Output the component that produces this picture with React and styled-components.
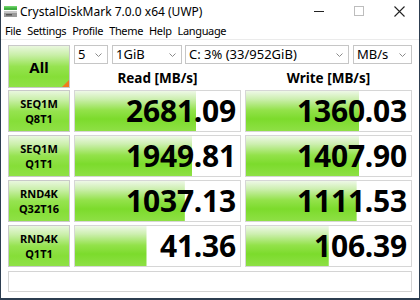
import React from "react";
import styled, { createGlobalStyle } from "styled-components";

const Global = createGlobalStyle`
  html, body { margin: 0; padding: 0; background: #fff; overflow: hidden; }
  * { box-sizing: border-box; }
`;

const Window = styled.div`
  width: 420px;
  height: 300px;
  background: #fff;
  border-left: 1px solid #2c3d50;
  border-right: 1px solid #2c3d50;
  border-bottom: 2px solid #2c3d50;
  font-family: "Noto Sans", "Open Sans", sans-serif;
  color: #000;
  display: flex;
  flex-direction: column;
`;

const TitleBar = styled.div`
  height: 22px;
  display: flex;
  align-items: center;
  padding-left: 2px;
`;

const TitleText = styled.span`
  font-size: 12px;
  margin-left: 2px;
  flex: 1;
  white-space: nowrap;
`;

const WinButton = styled.div`
  width: 40px;
  height: 22px;
  display: flex;
  align-items: center;
  justify-content: center;
`;

const MenuBar = styled.div`
  height: 18px;
  display: flex;
  align-items: center;
  padding-left: 1px;
  border-bottom: 1px solid #ebebeb;
`;

const MenuItem = styled.span`
  font-size: 11px;
  letter-spacing: -0.35px;
  padding: 0 3px;
`;

const Client = styled.div`
  flex: 1;
  padding: 5px 7px 0 7px;
  display: flex;
  flex-direction: column;
`;

const Top = styled.div`
  display: grid;
  grid-template-columns: 62px 1fr;
  column-gap: 4px;
`;

const greenLabel = `linear-gradient(to bottom, #e9f7de 0%, #c9efa8 22%, #96e350 50%, #86de38 75%, #8fe146 100%)`;

const AllButton = styled.div`
  position: relative;
  height: 43px;
  border: 1px solid #c9c9c9;
  background: ${greenLabel};
  display: flex;
  align-items: center;
  justify-content: center;
  font-weight: 700;
  font-size: 15px;
`;

const Corner = styled.div`
  position: absolute;
  right: 0;
  bottom: 0;
  width: 0;
  height: 0;
  border-left: 7px solid transparent;
  border-bottom: 7px solid #f07a1e;
`;

const RightTop = styled.div`
  display: flex;
  flex-direction: column;
`;

const Controls = styled.div`
  display: flex;
  height: 19px;
`;

const Select = styled.div`
  width: ${(p) => p.$w}px;
  margin-right: ${(p) => p.$gap || 0}px;
  height: 19px;
  border: 1px solid #c6c6c6;
  background: #fff;
  display: flex;
  align-items: center;
  padding-left: 3px;
  font-size: 13px;
  white-space: nowrap;
  overflow: hidden;
`;

const SelectText = styled.span`
  flex: 1;
  line-height: 17px;
`;

const Chevron = styled.svg`
  margin-right: 5px;
  flex: none;
`;

const HeaderRow = styled.div`
  display: grid;
  grid-template-columns: 167px 167px;
  column-gap: 4px;
  height: 24px;
`;

const Header = styled.div`
  display: flex;
  align-items: flex-end;
  justify-content: center;
  font-weight: 700;
  font-size: 13.5px;
  padding-bottom: 1px;
`;

const Results = styled.div`
  margin-top: 2px;
  display: grid;
  grid-template-columns: 62px 167px 167px;
  grid-auto-rows: 42px;
  column-gap: 4px;
  row-gap: 3px;
`;

const Label = styled.div`
  border: 1px solid #c9c9c9;
  background: ${greenLabel};
  display: flex;
  flex-direction: column;
  align-items: center;
  justify-content: center;
  font-weight: 700;
  font-size: 11px;
  line-height: 15px;
`;

const barGradient = `linear-gradient(to bottom, #eef8e7 0%, #cdefb0 20%, #93e24a 48%, #7cdb2c 70%, #8ee045 100%)`;

const Value = styled.div`
  border: 1px solid #d6d6d6;
  background-color: #fff;
  background-image: ${barGradient};
  background-repeat: no-repeat;
  background-position: left top;
  display: flex;
  align-items: center;
  justify-content: flex-end;
  padding-right: 4px;
  font-weight: 700;
  font-size: 30px;
  letter-spacing: -0.2px;
  line-height: 1;
`;

const Status = styled.div`
  margin-top: 4px;
  height: 21px;
  border: 1px solid #d4d4d4;
  background: #fff;
`;

const rows = [
  ["SEQ1M", "Q8T1", 2681.09, 1360.03],
  ["SEQ1M", "Q1T1", 1949.81, 1407.9],
  ["RND4K", "Q32T16", 1037.13, 1111.53],
  ["RND4K", "Q1T1", 41.36, 106.39],
];

const pct = (v) => Math.max(0, Math.min(100, 16.5 + 16.6 * Math.log10(v)));

const ChevronIcon = () => (
  <Chevron width="7" height="4" viewBox="0 0 7 4">
    <path d="M0.5 0.5 L3.5 3.5 L6.5 0.5" fill="none" stroke="#8a8a8a" strokeWidth="1" />
  </Chevron>
);

const AppIcon = () => (
  <svg width="15" height="15" viewBox="0 0 15 15">
    <rect x="1" y="2" width="13" height="4" fill="#3fae3f" />
    <rect x="1" y="2" width="13" height="1.5" fill="#6fd36a" />
    <rect x="1" y="7" width="13" height="6" fill="#9a9a9a" />
    <rect x="1" y="7" width="13" height="2" fill="#c8c8c8" />
    <rect x="3" y="10" width="6" height="1.5" fill="#555" />
  </svg>
);

export default function App() {
  return (
    <>
      <Global />
      <Window>
        <TitleBar>
          <AppIcon />
          <TitleText>CrystalDiskMark 7.0.0 x64 (UWP)</TitleText>
          <WinButton>
            <svg width="11" height="11" viewBox="0 0 11 11">
              <line x1="0" y1="5.5" x2="10" y2="5.5" stroke="#222" strokeWidth="1" />
            </svg>
          </WinButton>
          <WinButton>
            <svg width="11" height="11" viewBox="0 0 11 11">
              <rect x="0.5" y="0.5" width="9" height="9" fill="none" stroke="#bdbdbd" strokeWidth="1" />
            </svg>
          </WinButton>
          <WinButton>
            <svg width="11" height="11" viewBox="0 0 11 11">
              <path d="M0.5 0.5 L10.5 10.5 M10.5 0.5 L0.5 10.5" stroke="#222" strokeWidth="1.1" />
            </svg>
          </WinButton>
        </TitleBar>
        <MenuBar>
          {["File", "Settings", "Profile", "Theme", "Help", "Language"].map((m) => (
            <MenuItem key={m}>{m}</MenuItem>
          ))}
        </MenuBar>
        <Client>
          <Top>
            <AllButton>
              All
              <Corner />
            </AllButton>
            <RightTop>
              <Controls>
                <Select $w={34} $gap={4}>
                  <SelectText>5</SelectText>
                  <ChevronIcon />
                </Select>
                <Select $w={70} $gap={3}>
                  <SelectText>1GiB</SelectText>
                  <ChevronIcon />
                </Select>
                <Select $w={164} $gap={4}>
                  <SelectText>C: 3% (33/952GiB)</SelectText>
                  <ChevronIcon />
                </Select>
                <Select $w={59}>
                  <SelectText>MB/s</SelectText>
                  <ChevronIcon />
                </Select>
              </Controls>
              <HeaderRow>
                <Header>Read [MB/s]</Header>
                <Header>Write [MB/s]</Header>
              </HeaderRow>
            </RightTop>
          </Top>
          <Results>
            {rows.map(([a, b, r, w], i) => (
              <React.Fragment key={i}>
                <Label>
                  <span>{a}</span>
                  <span>{b}</span>
                </Label>
                <Value style={{ backgroundSize: `${pct(r)}% 100%` }}>{r.toFixed(2)}</Value>
                <Value style={{ backgroundSize: `${pct(w)}% 100%` }}>{w.toFixed(2)}</Value>
              </React.Fragment>
            ))}
          </Results>
          <Status />
        </Client>
      </Window>
    </>
  );
}
